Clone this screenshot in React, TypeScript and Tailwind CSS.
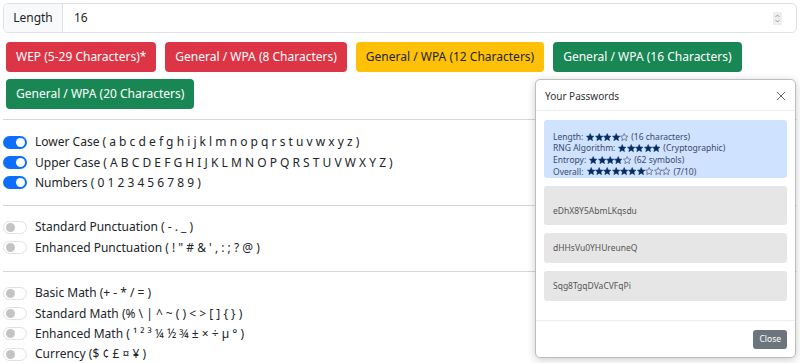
import React from "react";

const font = { fontFamily: '"Noto Sans", "Open Sans", sans-serif' };

function Switch({ on }: { on: boolean }) {
  return on ? (
    <span className="relative inline-block w-[24px] h-[13px] rounded-full bg-[#0d6efd] shrink-0">
      <span className="absolute right-[2px] top-[2px] w-[9px] h-[9px] rounded-full bg-white" />
    </span>
  ) : (
    <span className="relative inline-block w-[24px] h-[13px] rounded-full border border-[#dee2e6] bg-white shrink-0">
      <span className="absolute left-[2px] top-[1px] w-[9px] h-[9px] rounded-full bg-[#c4c4c4]" />
    </span>
  );
}

function Row({ on, label }: { on: boolean; label: string }) {
  return (
    <div className="flex items-center gap-[8px] h-[20.4px]">
      <Switch on={on} />
      <span className="text-[12px] text-[#212529] whitespace-pre">{label}</span>
    </div>
  );
}

function Btn({ color, text, dark }: { color: string; text: string; dark?: boolean }) {
  return (
    <div
      className={`h-[30px] px-[10px] flex items-center rounded-[4px] text-[12px] ${dark ? "text-[#212529]" : "text-white"}`}
      style={{ backgroundColor: color }}
    >
      {text}
    </div>
  );
}

const STAR = "M5 0.6 L6.3 3.5 L9.5 3.8 L7.1 5.9 L7.8 9.1 L5 7.4 L2.2 9.1 L2.9 5.9 L0.5 3.8 L3.7 3.5 Z";

function Star({ filled }: { filled: boolean }) {
  return (
    <svg width="8.4" height="8.4" viewBox="0 0 10 10" className="shrink-0">
      {filled ? (
        <path d={STAR} fill="#052c65" stroke="#052c65" strokeWidth="0.6" strokeLinejoin="round" />
      ) : (
        <path d={STAR} fill="none" stroke="#4a5a78" strokeWidth="0.8" strokeLinejoin="round" />
      )}
    </svg>
  );
}

const Stars = ({ full, empty }: { full: number; empty: number }) => (
  <span className="inline-flex items-center mx-[3px]">
    {Array.from({ length: full }).map((_, i) => (
      <Star key={`f${i}`} filled />
    ))}
    {Array.from({ length: empty }).map((_, i) => (
      <Star key={`e${i}`} filled={false} />
    ))}
  </span>
);

function InfoLine({ children }: { children: React.ReactNode }) {
  return <div className="h-[11.6px] flex items-center whitespace-pre leading-[10px]">{children}</div>;
}

export default function App() {
  return (
    <div className="relative w-[800px] h-[363px] bg-white overflow-hidden" style={font}>
      <div className="px-[3px] pt-[3px]">
        <div className="flex h-[30px] border border-[#dee2e6] rounded-[5px] overflow-hidden">
          <div className="w-[59px] bg-[#f8f9fa] border-r border-[#dee2e6] flex items-center justify-center text-[12px] text-[#212529]">
            Length
          </div>
          <div className="flex-1 flex items-center pl-[11px] pr-[14px] text-[12px] text-[#212529]">
            <span className="flex-1">16</span>
            <span className="w-[9px] h-[13px] bg-[#eeeeee] flex flex-col items-center justify-center">
              <svg width="7" height="11" viewBox="0 0 7 11" fill="none" stroke="#888" strokeWidth="0.8">
                <path d="M1.5 4 L3.5 2 L5.5 4" />
                <path d="M1.5 7 L3.5 9 L5.5 7" />
              </svg>
            </span>
          </div>
        </div>
        <div className="flex flex-wrap gap-x-[9px] gap-y-[7px] mt-[9px] pl-[3px]">
          <Btn color="#dc3545" text="WEP (5-29 Characters)*" />
          <Btn color="#dc3545" text="General / WPA (8 Characters)" />
          <Btn color="#ffc107" text="General / WPA (12 Characters)" dark />
          <Btn color="#198754" text="General / WPA (16 Characters)" />
          <Btn color="#198754" text="General / WPA (20 Characters)" />
        </div>
        <div className="border-t border-[#d6d6d6] mt-[10px] mb-[12px]" />
        <Row on label="Lower Case ( a b c d e f g h i j k l m n o p q r s t u v w x y z )" />
        <Row on label="Upper Case ( A B C D E F G H I J K L M N O P Q R S T U V W X Y Z )" />
        <Row on label="Numbers ( 0 1 2 3 4 5 6 7 8 9 )" />
        <div className="border-t border-[#d6d6d6] mt-[12px] mb-[11px]" />
        <Row on={false} label="Standard Punctuation ( - . _ )" />
        <Row on={false} label={`Enhanced Punctuation ( ! " # & ' , : ; ? @ )`} />
        <div className="border-t border-[#d6d6d6] mt-[13px] mb-[11px]" />
        <Row on={false} label="Basic Math (+ - * / = )" />
        <Row on={false} label="Standard Math (% \ | ^ ~ ( ) < > [ ] { } )" />
        <Row on={false} label="Enhanced Math ( ¹ ² ³ ¼ ½ ¾ ± × ÷ µ ° )" />
        <Row on={false} label="Currency ($ ¢ £ ¤ ¥ )" />
      </div>

      <div className="absolute left-[535px] top-[79px] w-[261px] h-[279px] bg-white border border-[#bdbdbd] rounded-[5px] shadow-[0_2px_8px_rgba(0,0,0,0.2)] flex flex-col">
        <div className="h-[31px] flex items-center justify-between px-[9px] pt-[2px] border-b border-[#eeeeee]">
          <span className="text-[10px] text-[#333]">Your Passwords</span>
          <svg width="10" height="10" viewBox="0 0 10 10" stroke="#666" strokeWidth="1">
            <path d="M1 1 L9 9 M9 1 L1 9" />
          </svg>
        </div>
        <div className="flex-1 px-[8px] pt-[9px] flex flex-col gap-[8px]">
          <div className="h-[58px] bg-[#cfe2ff] rounded-[3px] px-[9px] pt-[11px] text-[8.5px] text-[#394a6a]">
            <InfoLine>Length:<Stars full={4} empty={1} />(16 characters)</InfoLine>
            <InfoLine>RNG Algorithm:<Stars full={5} empty={0} />(Cryptographic)</InfoLine>
            <InfoLine>Entropy:<Stars full={4} empty={1} />(62 symbols)</InfoLine>
            <InfoLine>Overall:<Stars full={7} empty={3} />(7/10)</InfoLine>
          </div>
          <div className="h-[39px] bg-[#e6e6e6] rounded-[3px] px-[9px] pt-[19px] text-[8.5px] text-[#555]">
            eDhX8Y5AbmLKqsdu
          </div>
          {["dHHsVu0YHUreuneQ", "Sqg8TgqDVaCVFqPi"].map((p) => (
            <div key={p} className="h-[30px] bg-[#e6e6e6] rounded-[3px] px-[9px] flex items-center text-[8.5px] text-[#555]">
              {p}
            </div>
          ))}
        </div>
        <div className="h-[37px] border-t border-[#eeeeee] flex items-center justify-end px-[8px]">
          <div className="h-[19px] px-[6px] bg-[#6c757d] rounded-[3px] text-white text-[8.5px] flex items-center">Close</div>
        </div>
      </div>
    </div>
  );
}
